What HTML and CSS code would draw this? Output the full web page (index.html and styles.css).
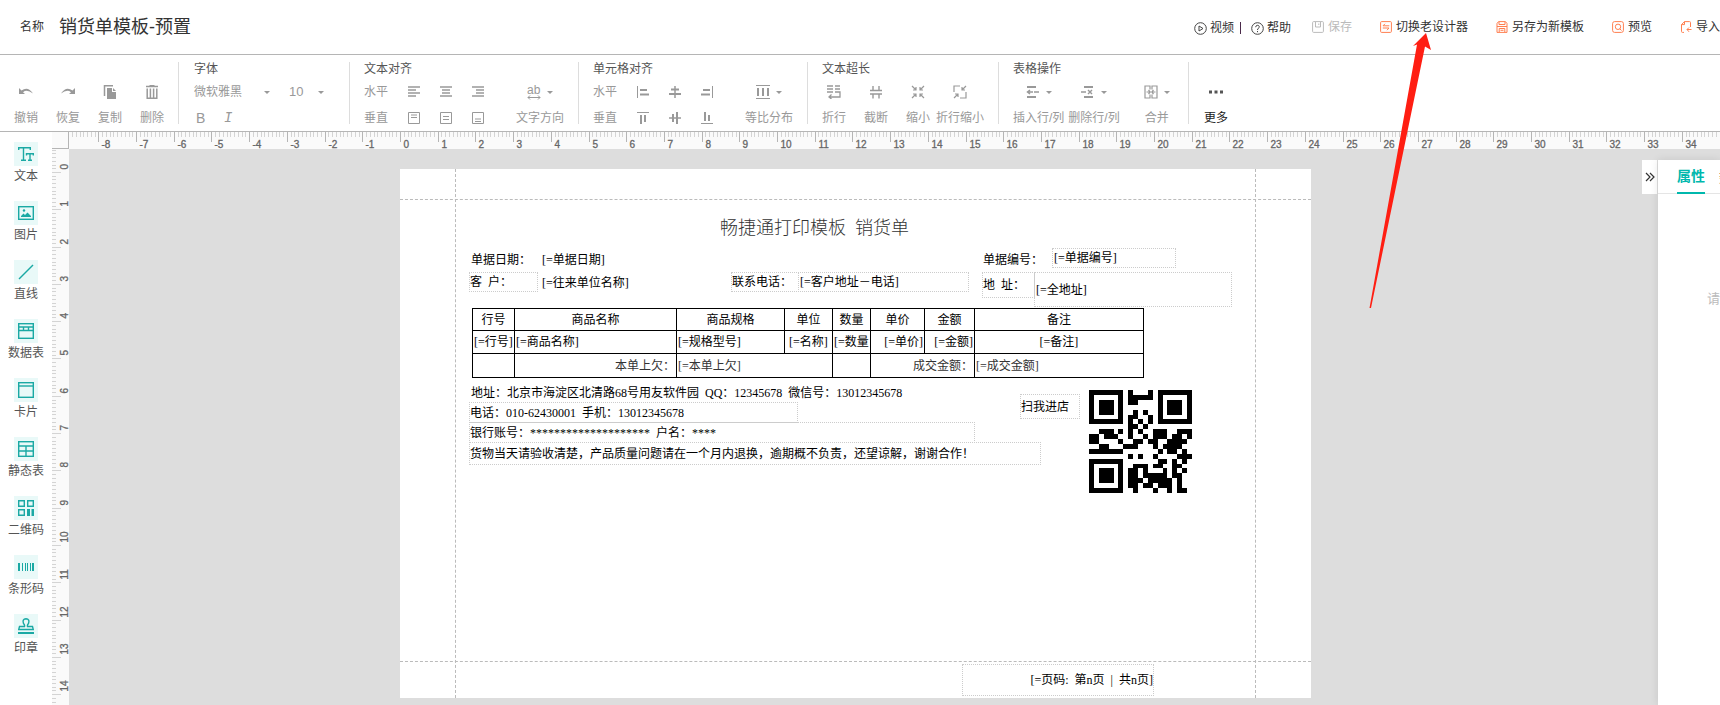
FILE: index.html
```html
<!DOCTYPE html>
<html lang="zh-CN">

<head>
  <meta charset="UTF-8">
  <meta name="viewport" content="width=device-width, initial-scale=1.0">
  <title>销货单模板-预置</title>
  <link rel="stylesheet" href="styles.css">
</head>

<body>
  <header class="topbar">
    <label class="name-label" for="tplName">名称</label>
    <input class="name-input" id="tplName" type="text" value="销货单模板-预置">
    <nav class="help-links">
      <a href="#video"><svg width="13" height="13" viewBox="0 0 13 13"><circle cx="6.500" cy="6.500" r="5.800" fill="none" stroke="#444"/><path d="M5 4v5l4-2.500z" fill="none" stroke="#444"/></svg>视频</a>
      <span class="bar"></span>
      <a href="#help"><svg width="13" height="13" viewBox="0 0 13 13"><circle cx="6.500" cy="6.500" r="5.800" fill="none" stroke="#444"/><path d="M4.700 5.200C4.700 2.600 8.400 2.800 8.300 5C8.200 6.300 6.500 6.200 6.500 8M6.500 9v1.200" fill="none" stroke="#444"/></svg>帮助</a>
    </nav>
    <div class="actions">
      <button type="button" class="action" disabled><svg class="ico-grey" width="12" height="12" viewBox="0 0 12 12"><rect x=".6" y=".6" width="10.800" height="10.800" rx="1"/><path d="M3.500 1v5h5V1M6.800 2.500v1.500"/></svg>保存</button>
      <button type="button" class="action"><svg class="ico-orange" width="12" height="12" viewBox="0 0 12 12"><rect x=".6" y=".6" width="10.800" height="10.800" rx="1"/><path d="M9.300 4.800H3L5 2.800M2.800 7H9L7 9.200"/></svg>切换老设计器</button>
      <button type="button" class="action"><svg class="ico-orange" width="12" height="12" viewBox="0 0 12 12"><path d="M1 11.400V2.500L2.500.6h7L11 2.500v8.900zM3 1v2.500h6V1M1 5.500h10M3.200 11V7.500h5.600V11M4.500 9.300h3"/></svg>另存为新模板</button>
      <button type="button" class="action"><svg class="ico-orange" width="12" height="12" viewBox="0 0 12 12"><rect x=".6" y=".6" width="10.800" height="10.800" rx="2"/><circle cx="6" cy="5.800" r="2.700"/><path d="M7.800 7.800l1.700 1.700"/></svg>预览</button>
      <button type="button" class="action"><svg class="ico-orange" width="12" height="12" viewBox="0 0 12 12"><path d="M10.500 6V1.500Q10.500.6 9.500.6H4.500L1.500 3.600V8M4.500.6v3h-3M1.500 8v2.500Q1.500 11.400 2.500 11.400H4M11.500 8.500H7L9 6.500M7 8.500L9 10.800"/></svg>导入</button>
    </div>
  </header>

  <div class="toolbar">
    <div class="group group-edit">
      <div class="group-title"></div>
      <div class="group-body">
        <button type="button" class="tool"><svg width="14" height="14" viewBox="0 0 14 14"><path d="M0 3v6h6L4 7.200Q8 4 14 8.500Q9 1 2.500 5.500z" fill="#999"/></svg>撤销</button>
        <button type="button" class="tool"><svg width="14" height="14" viewBox="0 0 14 14"><path d="M14 3v6H8l2-1.800Q6 4 0 8.500Q5 1 11.500 5.500z" fill="#999"/></svg>恢复</button>
        <button type="button" class="tool"><svg width="14" height="14" viewBox="0 0 14 14"><path d="M1.500 11V.8H10" fill="none" stroke="#999" stroke-width="1.500"/><path d="M4 3h5v4h4v7H4z" fill="#999"/><path d="M10 3l3 3h-3z" fill="#999"/></svg>复制</button>
        <button type="button" class="tool"><svg width="14" height="14" viewBox="0 0 14 14"><path d="M1 1.500h12M4.500.7h5" stroke="#999" stroke-width="1.500"/><path d="M2.200 3.500v9.800h9.600V3.500M5.400 3.500V13M8.600 3.500V13" fill="none" stroke="#999" stroke-width="1.500"/></svg>删除</button>
      </div>
    </div>

    <div class="group group-font">
      <div class="group-title">字体</div>
      <div class="group-rows">
        <div class="row">
          <span class="picker picker-font"><select aria-label="字体"><option>微软雅黑</option></select><i class="caret"></i></span>
          <span class="picker picker-size"><select aria-label="字号"><option>10</option></select><i class="caret"></i></span>
        </div>
        <div class="row">
          <button type="button" class="style-btn">B</button>
          <button type="button" class="style-btn italic">I</button>
        </div>
      </div>
    </div>

    <div class="group group-align">
      <div class="group-title">文本对齐</div>
      <div class="group-body">
        <div class="align-grid">
          <span>水平</span>
          <button type="button" aria-label="左对齐"><svg width="12" height="12" viewBox="0 0 12 12"><path d="M0 1h12M0 4h8M0 7h12M0 10h8" stroke="#999" stroke-width="1.500"/></svg></button>
          <button type="button" aria-label="居中"><svg width="12" height="12" viewBox="0 0 12 12"><path d="M0 1h12M2 4h8M0 10h12M2 7h8" stroke="#999" stroke-width="1.500"/></svg></button>
          <button type="button" aria-label="右对齐"><svg width="12" height="12" viewBox="0 0 12 12"><path d="M0 1h12M4 4h8M0 10h12M4 7h8" stroke="#999" stroke-width="1.500"/></svg></button>
          <span>垂直</span>
          <button type="button" aria-label="顶端"><svg width="12" height="12" viewBox="0 0 12 12"><path d="M.5.5h11v11H.5zM3 3h6M3 5.500h6" fill="none" stroke="#999"/></svg></button>
          <button type="button" aria-label="中部"><svg width="12" height="12" viewBox="0 0 12 12"><path d="M.5.5h11v11H.5zM3 4.500h6M3 7.500h6" fill="none" stroke="#999"/></svg></button>
          <button type="button" aria-label="底端"><svg width="12" height="12" viewBox="0 0 12 12"><path d="M.5.5h11v11H.5zM3 7h6M3 9.500h6" fill="none" stroke="#999"/></svg></button>
        </div>
        <button type="button" class="tool"><span class="with-caret"><svg width="14" height="16" viewBox="0 0 14 16"><text x="0" y="10" class="ab">ab</text><path d="M1 13.500h12M3 11.500L1 13.500l2 2M11 11.500l2 2-2 2" fill="none" stroke="#999"/></svg><i class="caret"></i></span>文字方向</button>
      </div>
    </div>

    <div class="group group-align">
      <div class="group-title">单元格对齐</div>
      <div class="group-body">
        <div class="align-grid">
          <span>水平</span>
          <button type="button" aria-label="左对齐"><svg width="12" height="12" viewBox="0 0 12 12"><path d="M.5 0v12" stroke="#999"/><path d="M3 4h7M3 8.500h9" stroke="#999" stroke-width="2"/></svg></button>
          <button type="button" aria-label="居中"><svg width="12" height="12" viewBox="0 0 12 12"><path d="M6 0v12" stroke="#999" stroke-width="1.500"/><path d="M2 3.500h8M0 8h12" stroke="#999" stroke-width="2"/></svg></button>
          <button type="button" aria-label="右对齐"><svg width="12" height="12" viewBox="0 0 12 12"><path d="M11.500 0v12" stroke="#999"/><path d="M2 4h7M0 8.500h9" stroke="#999" stroke-width="2"/></svg></button>
          <span>垂直</span>
          <button type="button" aria-label="顶端"><svg width="12" height="12" viewBox="0 0 12 12"><path d="M0 .5h12" stroke="#999"/><path d="M4 3v9M8 3v7" stroke="#999" stroke-width="2"/></svg></button>
          <button type="button" aria-label="中部"><svg width="12" height="12" viewBox="0 0 12 12"><path d="M0 6h12" stroke="#999" stroke-width="1.500"/><path d="M4 2v8M8 0v12" stroke="#999" stroke-width="2"/></svg></button>
          <button type="button" aria-label="底端"><svg width="12" height="12" viewBox="0 0 12 12"><path d="M0 11.500h12" stroke="#999"/><path d="M4 0v9M8 3v6" stroke="#999" stroke-width="2"/></svg></button>
        </div>
        <button type="button" class="tool"><span class="with-caret"><svg width="14" height="14" viewBox="0 0 14 14"><path d="M0 .5h14M0 13.500h14" stroke="#999"/><path d="M2 3v8M7 3v8M12 3v8" stroke="#999" stroke-width="2"/></svg><i class="caret"></i></span>等比分布</button>
      </div>
    </div>

    <div class="group group-overflow">
      <div class="group-title">文本超长</div>
      <div class="group-body">
        <button type="button" class="tool"><svg width="14" height="14" viewBox="0 0 14 14"><path d="M0 1h6M0 4h6M0 7h6M8 1h5M8 4h5M8 7h5v5H2M4.500 9.500L2 12l2.500 2" fill="none" stroke="#999" stroke-width="1.300"/></svg>折行</button>
        <button type="button" class="tool"><svg width="14" height="14" viewBox="0 0 14 14"><path d="M4 1v4.500M10 1v4.500M1 5.500h12M1 9h12M4 9v4.500M10 9v4.500" fill="none" stroke="#999" stroke-width="1.400"/></svg>截断</button>
        <button type="button" class="tool"><svg width="14" height="14" viewBox="0 0 14 14"><path d="M1 1l4 4M2 5h3V2M13 1L9 5M12 5H9V2M1 13l4-4M2 9h3v3M13 13L9 9M12 9H9v3" fill="none" stroke="#999" stroke-width="1.200"/></svg>缩小</button>
        <button type="button" class="tool"><svg width="14" height="14" viewBox="0 0 14 14"><path d="M7 1H1v6M13 7v6H7M13 1L9 5M12 5H9V2M1 13l4-4M2 9h3v3" fill="none" stroke="#999" stroke-width="1.200"/></svg>折行缩小</button>
      </div>
    </div>

    <div class="group group-table">
      <div class="group-title">表格操作</div>
      <div class="group-body">
        <button type="button" class="tool"><span class="with-caret"><svg width="14" height="14" viewBox="0 0 14 14"><path d="M1 2h9M1 12h9" stroke="#999" stroke-width="2"/><path d="M1 7h6M4 5L1.500 7 4 9M8 7h5" fill="none" stroke="#999" stroke-width="1.500"/></svg><i class="caret"></i></span>插入行/列</button>
        <button type="button" class="tool"><span class="with-caret"><svg width="14" height="14" viewBox="0 0 14 14"><path d="M3 2h9M3 12h9" stroke="#999" stroke-width="2"/><path d="M0 7h5M7 5l4 4M11 5L7 9" fill="none" stroke="#999" stroke-width="1.400"/></svg><i class="caret"></i></span>删除行/列</button>
        <button type="button" class="tool"><span class="with-caret"><svg width="14" height="14" viewBox="0 0 14 14"><path d="M6 4.500V1H1v12h5V9.500M8 4.500V1h5v12H8V9.500M2.500 7h3.500M8 7h3.500M4.500 5L6.200 7 4.500 9M9.500 5L7.800 7l1.700 2" fill="none" stroke="#999" stroke-width="1.200"/></svg><i class="caret"></i></span>合并</button>
      </div>
    </div>

    <div class="group group-more">
      <div class="group-title"></div>
      <div class="group-body">
        <button type="button" class="tool more"><svg width="16" height="4" viewBox="0 0 16 4"><path d="M1 .5h3v3H1zM6.500.5h3v3h-3zM12 .5h3v3h-3z" fill="#555"/></svg>更多</button>
      </div>
    </div>
  </div>

  <main class="designer">
    <aside class="palette">
      <button type="button" class="part"><span class="part-icon"><svg width="16" height="16" viewBox="0 0 16 16"><path d="M.7 4V1.700h11.600V4M5.500 1.700v12.600M3 14.300h5M8.500 9.500V7.700h6.800v1.800M12 7.700v6.600M10 14.300h4"/></svg></span>文本</button>
      <button type="button" class="part"><span class="part-icon"><svg width="16" height="16" viewBox="0 0 16 16"><rect x=".7" y="1.700" width="14.600" height="12.600"/><circle cx="6" cy="5.500" r="1.200" class="solid"/><path class="solid" d="M3 12V11l2.500-2.500 1.500 1.500L9.500 7.500 13 11v1z"/></svg></span>图片</button>
      <button type="button" class="part"><span class="part-icon"><svg width="16" height="16" viewBox="0 0 16 16"><path d="M1 15L15 1"/></svg></span>直线</button>
      <button type="button" class="part"><span class="part-icon"><svg width="16" height="16" viewBox="0 0 16 16"><rect x=".7" y=".7" width="14.600" height="14.600"/><path d="M1 4h14M1 7.500h14M5.500 4v3.500M10.500 4v3.500"/></svg></span>数据表</button>
      <button type="button" class="part"><span class="part-icon"><svg width="16" height="16" viewBox="0 0 16 16"><rect x=".7" y=".7" width="14.600" height="14.600"/><path d="M1 4h14"/></svg></span>卡片</button>
      <button type="button" class="part"><span class="part-icon"><svg width="16" height="16" viewBox="0 0 16 16"><rect x=".7" y=".7" width="14.600" height="14.600"/><path d="M1 5h14M1 10h14M8 5v10"/></svg></span>静态表</button>
      <button type="button" class="part"><span class="part-icon"><svg width="16" height="16" viewBox="0 0 16 16"><path d="M.7.7h5.600v5.600H.7zM9.700.7h5.600v5.600H9.700zM.7 9.700h5.600v5.600H.7z"/><path class="solid" d="M9 9h3v7H9zM13.500 9H16v7h-2.500z"/></svg></span>二维码</button>
      <button type="button" class="part"><span class="part-icon"><svg width="16" height="16" viewBox="0 0 16 16"><path class="solid" d="M0 4h2v8H0zM4 4h1v8H4zM7 4h1v8H7zM9 4h1v8H9zM12 4h1v8h-1zM14 4h2v8h-2z"/></svg></span>条形码</button>
      <button type="button" class="part"><span class="part-icon"><svg width="16" height="16" viewBox="0 0 16 16"><path d="M6.500 8.500Q7 7 5.500 5.500Q4 1 8 .8Q12 1 10.500 5.500Q9 7 9.500 8.500H14.500L15.300 11.500H.7L1.500 8.500z"/><path class="solid" d="M0 14h16v2H0z"/></svg></span>印章</button>
    </aside>

    <div class="ruler-corner"></div>
    <div class="ruler-top"><svg id="rulerTop" width="100%" height="17"></svg></div>
    <div class="ruler-left"><svg id="rulerLeft" width="17" height="100%"></svg></div>

    <div class="canvas">
      <div class="paper">
        <div class="guide guide-top"></div>
        <div class="guide guide-bottom"></div>
        <div class="guide guide-left"></div>
        <div class="guide guide-right"></div>

        <h1 class="doc-title">畅捷通打印模板&ensp;销货单</h1>

        <div class="field f-date-label">单据日期：</div>
        <div class="field f-date">[=单据日期]</div>
        <div class="field f-no-label">单据编号：</div>
        <div class="field boxed f-no">[=单据编号]</div>
        <div class="field boxed f-customer-label">客&ensp;户：</div>
        <div class="field f-customer">[=往来单位名称]</div>
        <div class="field boxed f-phone-label">联系电话：</div>
        <div class="field boxed f-phone">[=客户地址－电话]</div>
        <div class="field boxed f-addr-label">地&ensp;址：</div>
        <div class="field boxed f-addr">[=全地址]</div>

        <table class="items">
          <colgroup>
            <col class="c-no"><col class="c-name"><col class="c-spec"><col class="c-unit"><col class="c-qty"><col class="c-price"><col class="c-sum"><col class="c-note">
          </colgroup>
          <tr>
            <th>行号</th><th>商品名称</th><th>商品规格</th><th>单位</th><th>数量</th><th>单价</th><th>金额</th><th>备注</th>
          </tr>
          <tr>
            <td>[=行号]</td><td>[=商品名称]</td><td>[=规格型号]</td><td class="center">[=名称]</td><td>[=数量</td><td class="right">[=单价]</td><td class="right">[=金额]</td><td class="center">[=备注]</td>
          </tr>
          <tr class="total">
            <td></td><td class="right">本单上欠：</td><td colspan="2">[=本单上欠]</td><td></td><td colspan="2" class="right">成交金额：</td><td>[=成交金额]</td>
          </tr>
        </table>

        <div class="field f-company">地址：北京市海淀区北清路68号用友软件园&ensp;QQ：12345678&ensp;微信号：13012345678</div>
        <div class="field boxed f-tel">电话：010-62430001&ensp;手机：13012345678</div>
        <div class="field boxed f-bank">银行账号：********************&ensp;户名：****</div>
        <div class="field boxed f-notice">货物当天请验收清楚，产品质量问题请在一个月内退换，逾期概不负责，还望谅解，谢谢合作！</div>
        <div class="field boxed f-scan">扫我进店</div>
        <svg id="qr" class="qr" viewBox="0 0 21 21" shape-rendering="crispEdges"></svg>
        <div class="field boxed f-page">[=页码:&ensp;第n页&ensp;|&ensp;共n页]</div>
      </div>
    </div>

    <aside class="props">
      <button type="button" class="collapse" aria-label="收起"><svg width="10" height="10" viewBox="0 0 10 10"><path d="M1 1l4 4-4 4M5 1l4 4-4 4" fill="none" stroke="#333" stroke-width="1.200"/></svg></button>
      <div class="props-panel">
        <div class="tabs">
          <button type="button" class="tab active">属性</button>
          <button type="button" class="tab">数据</button>
        </div>
        <p class="empty">请</p>
      </div>
    </aside>
  </main>

  <svg class="pointer" width="64" height="278" viewBox="1368 32 64 278">
    <path d="M1426 33L1431 50L1425 46.500L1371 308H1369.500L1417 44.500L1413 46z" fill="#ff1e12"/>
  </svg>

  <script src="script.js"></script>
</body>

</html>
```
FILE: styles.css
```css
* {
  box-sizing: border-box;
}

body {
  margin: 0;
  height: 100vh;
  display: flex;
  flex-direction: column;
  overflow: hidden;
  background: #fff;
  color: #333;
  font-family: "Liberation Sans", "Noto Sans CJK SC", sans-serif;
  font-size: 12px;
  line-height: 16px;
}

button,
input,
select {
  margin: 0;
  padding: 0;
  border: 0;
  background: none;
  color: inherit;
  font: inherit;
}

svg {
  display: block;
  flex: none;
}

/* top bar */
.topbar {
  display: flex;
  align-items: center;
  height: 55px;
  padding-left: 20px;
  border-bottom: 1px solid #b5b5b5;
  white-space: nowrap;
}

.name-input {
  flex: 1;
  min-width: 0;
  margin-left: 15px;
  font-size: 18px;
  line-height: 24px;
}

.help-links {
  display: flex;
  align-items: center;
  gap: 6px;
  padding-top: 2px;
  margin-right: 21px;
}

.help-links a {
  display: flex;
  align-items: center;
  gap: 3px;
  color: #333;
  text-decoration: none;
}

.bar {
  width: 1px;
  height: 12px;
  margin-right: 4px;
  background: #4a2a4a;
}

.actions {
  display: flex;
  gap: 28px;
}

.action {
  display: flex;
  align-items: center;
  gap: 4px;
}

.action:disabled {
  color: #bbb;
}

.ico-grey,
.ico-orange {
  fill: none;
  stroke: #bbb;
}

.ico-orange {
  stroke: #ff7f50;
}

/* toolbar */
.toolbar {
  display: flex;
  height: 77px;
  padding-top: 7px;
  border-bottom: 1px solid #b5b5b5;
  color: #999;
  white-space: nowrap;
}

.group {
  height: 62px;
  padding-left: 14px;
  border-right: 1px solid #ddd;
}

.group-more {
  padding-left: 15px;
  border-right: 0;
}

.group-title {
  height: 14px;
  line-height: 14px;
  color: #555;
}

.group-body {
  display: flex;
}

.group-edit {
  width: 179px;
}

.group-edit .group-body {
  gap: 18px;
}

.group-font {
  width: 171px;
  padding-left: 15px;
}

.group-align {
  width: 229px;
}

.group-align .group-body {
  gap: 22px;
}

.group-overflow {
  width: 191px;
}

.group-overflow .tool {
  margin-right: 18px;
}

.group-overflow .tool:nth-child(n+3) {
  margin-right: 6px;
}

.group-table {
  width: 190px;
}

.group-table .group-body {
  gap: 4px;
}

.group-table .tool:last-child {
  margin-left: 20px;
}

.tool {
  display: grid;
  grid-template-rows: 32px 20px;
  justify-items: center;
  align-items: center;
}

.tool.more {
  color: #222;
}

.with-caret {
  display: flex;
  align-items: center;
  gap: 6px;
}

.caret {
  width: 0;
  border: 3px solid transparent;
  border-top-color: #999;
  border-bottom: 0;
  pointer-events: none;
}

.ab {
  font-family: "Liberation Sans", sans-serif;
  font-size: 12px;
  fill: #999;
}

.row {
  display: flex;
  align-items: center;
  height: 20px;
}

.row:first-child {
  height: 32px;
}

.picker {
  display: flex;
  align-items: center;
}

.picker select {
  flex: 1;
  min-width: 0;
  appearance: none;
}

.picker-font {
  width: 76px;
  margin-right: 19px;
}

.picker-size {
  width: 35px;
  font-size: 13px;
}

.style-btn {
  width: 28px;
  padding-left: 2px;
  font-size: 14px;
  text-align: left;
}

.style-btn.italic {
  font-family: "Liberation Mono", monospace;
  font-style: italic;
}

.align-grid {
  display: grid;
  grid-template-columns: 34px 32px 32px 32px;
  grid-template-rows: 32px 20px;
  align-items: center;
}

.align-grid button {
  justify-self: center;
}

/* designer area */
.designer {
  flex: 1;
  min-height: 0;
  display: grid;
  grid-template-columns: 52px 17px 1fr auto;
  grid-template-rows: 17px 1fr;
  background: #ddd;
}

.palette {
  grid-row: 1 / 3;
  display: flex;
  flex-direction: column;
  align-items: center;
  gap: 17px;
  padding-top: 10px;
  background: #fff;
  overflow: hidden;
}

.part {
  display: flex;
  flex-direction: column;
  align-items: center;
  gap: 2px;
  color: #555;
}

.part-icon {
  display: grid;
  place-items: center;
  width: 24px;
  height: 24px;
  background: #e9f9f8;
}

.part-icon svg {
  fill: none;
  stroke: #1aa9a4;
  stroke-width: 1.4;
}

.part-icon .solid {
  fill: #1aa9a4;
  stroke: none;
}

.ruler-corner {
  background: #fafafa;
  border-right: 1px solid #b5b5b5;
  border-bottom: 1px solid #b5b5b5;
}

.ruler-top {
  grid-column: 3 / 5;
  background: #fafafa;
  overflow: hidden;
}

.ruler-left {
  grid-column: 2;
  background: #fafafa;
  overflow: hidden;
}

.tick {
  stroke: #d4d4d4;
}

.tick.major {
  stroke: #b5b5b5;
}

.ruler-text {
  font-family: "Liberation Sans", sans-serif;
  font-size: 10px;
  fill: #666;
  stroke: #666;
  stroke-width: .3;
}

.canvas {
  grid-column: 3;
  min-width: 0;
  padding: 20px 0 0 331px;
  overflow: hidden;
}

.paper {
  position: relative;
  width: 911px;
  height: 529px;
  background: #fff;
  color: #000;
  font-family: "Liberation Serif", "Noto Sans CJK SC", serif;
}

.guide {
  position: absolute;
  border: 0 dashed #bbb;
}

.guide-top,
.guide-bottom {
  left: 0;
  right: 0;
  border-top-width: 1px;
}

.guide-left,
.guide-right {
  top: 0;
  bottom: 0;
  border-left-width: 1px;
}

.guide-top { top: 30px; }
.guide-bottom { bottom: 36px; }
.guide-left { left: 55px; }
.guide-right { right: 55px; }

.doc-title {
  position: absolute;
  top: 47px;
  left: 320px;
  margin: 0;
  color: #333;
  font-size: 18px;
  font-weight: 300;
  line-height: 24px;
  white-space: nowrap;
}

.field {
  position: absolute;
  display: flex;
  align-items: center;
  height: 20px;
  white-space: nowrap;
}

.boxed {
  border: 1px dotted #ccc;
}

.f-date-label { left: 71px; top: 81px; }
.f-date { left: 142px; top: 81px; }
.f-no-label { left: 583px; top: 81px; }
.f-no { left: 652px; top: 79px; width: 124px; padding-left: 1px; }
.f-customer-label { left: 69px; top: 103px; width: 69px; }
.f-customer { left: 142px; top: 104px; }
.f-phone-label { left: 331px; top: 103px; width: 68px; }
.f-phone { left: 398px; top: 103px; width: 171px; padding-left: 1px; }
.f-addr-label { left: 582px; top: 103px; width: 53px; height: 26px; }
.f-addr { left: 634px; top: 103px; width: 198px; height: 35px; padding-left: 1px; }
.f-company { left: 71px; top: 214px; }
.f-tel { left: 69px; top: 233px; width: 329px; height: 21px; }
.f-bank { left: 69px; top: 253px; width: 506px; height: 21px; }
.f-notice { left: 69px; top: 273px; width: 572px; height: 23px; }
.f-scan { left: 620px; top: 225px; width: 60px; height: 25px; }
.f-page { left: 562px; top: 495px; width: 192px; height: 32px; justify-content: flex-end; }

.items {
  position: absolute;
  top: 139px;
  left: 72px;
  width: 672px;
  table-layout: fixed;
  border-collapse: collapse;
}

.items th,
.items td {
  height: 23px;
  padding: 0 1px;
  border: 1px solid #000;
  font-weight: 400;
  text-align: left;
  white-space: nowrap;
  overflow: hidden;
}

.items th {
  height: 22px;
}

.items th,
.items .center {
  text-align: center;
}

.items .right {
  text-align: right;
}

.items .total td {
  height: 24px;
  color: #333;
}

.c-no { width: 42px; }
.c-name { width: 162px; }
.c-spec { width: 108px; }
.c-unit { width: 48px; }
.c-qty { width: 38px; }
.c-price { width: 54px; }
.c-sum { width: 50px; }

.qr {
  position: absolute;
  left: 689px;
  top: 221px;
  width: 103px;
  height: 103px;
}

/* properties panel */
.props {
  grid-column: 4;
  display: flex;
  align-items: flex-start;
  gap: 1px;
  padding-top: 11px;
}

.collapse {
  display: grid;
  place-items: center;
  width: 15px;
  height: 34px;
  background: #fff;
}

.props-panel {
  width: 62px;
  height: 100%;
  background: #fff;
  box-shadow: 0 0 8px rgba(0, 0, 0, .1);
  overflow: hidden;
}

.tabs {
  display: flex;
  gap: 14px;
  height: 34px;
  padding-left: 19px;
  border-bottom: 1px solid #e5e5e5;
}

.tab {
  flex: none;
  height: 34px;
  color: #333;
  font-size: 14px;
}

.tab.active {
  border-bottom: 2px solid #00b8ad;
  color: #00b8ad;
  font-weight: 700;
}

.empty {
  margin: 97px 0 0 49px;
  color: #bbb;
  font-size: 13px;
  white-space: nowrap;
}

.pointer {
  position: absolute;
  left: 1368px;
  top: 32px;
  pointer-events: none;
}
```
FILE: script.js
```js
const SVG_NS = "http://www.w3.org/2000/svg";

function addNode(parent, name, attrs, text) {
  const node = document.createElementNS(SVG_NS, name);
  Object.keys(attrs).forEach((key) => node.setAttribute(key, attrs[key]));
  if (text !== undefined) {
    node.textContent = text;
  }
  parent.appendChild(node);
}

// one unit is a centimetre, ten ticks each
function drawTopRuler(origin, unit, length) {
  const svg = document.getElementById("rulerTop");
  for (let mm = -87; origin + mm * unit / 10 < length; mm++) {
    const x = Math.round(origin + mm * unit / 10) + 0.5;
    const major = mm % 10 === 0;
    addNode(svg, "line", { class: major ? "tick major" : "tick", x1: x, y1: 0, x2: x, y2: major ? 10 : 5 });
    if (major) {
      addNode(svg, "text", { class: "ruler-text", x: x + 3, y: 16 }, mm / 10);
    }
  }
}

function drawLeftRuler(origin, unit, length) {
  const svg = document.getElementById("rulerLeft");
  for (let mm = -6; origin + mm * unit / 10 < length; mm++) {
    const y = Math.round(origin + mm * unit / 10) + 0.5;
    const major = mm % 10 === 0;
    addNode(svg, "line", { class: "tick", x1: 0, y1: y, x2: major ? 9 : 4, y2: y });
    if (major) {
      addNode(svg, "text", { class: "ruler-text", transform: `translate(16 ${y - 3}) rotate(-90)` }, mm / 10);
    }
  }
}

const qrRows = [
  "111111101000101111111",
  "100000101111101000001",
  "101110101100001011101",
  "101110100000001011101",
  "101110100101001011101",
  "100000101100101000001",
  "111111101010101111111",
  "000000001101000000000",
  "001110101010011100111",
  "110111001001011101101",
  "110000100110110011110",
  "001100011100010111100",
  "111111100000001011010",
  "000000001010010000111",
  "111111100000001101010",
  "100000100111011001100",
  "101110101101000101010",
  "101110101101111101100",
  "101110101110111110100",
  "100000101101101110100",
  "111111100100010010110",
];

function drawQr() {
  const svg = document.getElementById("qr");
  qrRows.forEach((row, y) => {
    [...row].forEach((bit, x) => {
      if (bit === "1") {
        addNode(svg, "rect", { x, y, width: 1, height: 1 });
      }
    });
  });
}

drawTopRuler(331, 37.7, document.querySelector(".ruler-top").clientWidth);
drawLeftRuler(23, 37.3, document.querySelector(".ruler-left").clientHeight);
drawQr();
```
